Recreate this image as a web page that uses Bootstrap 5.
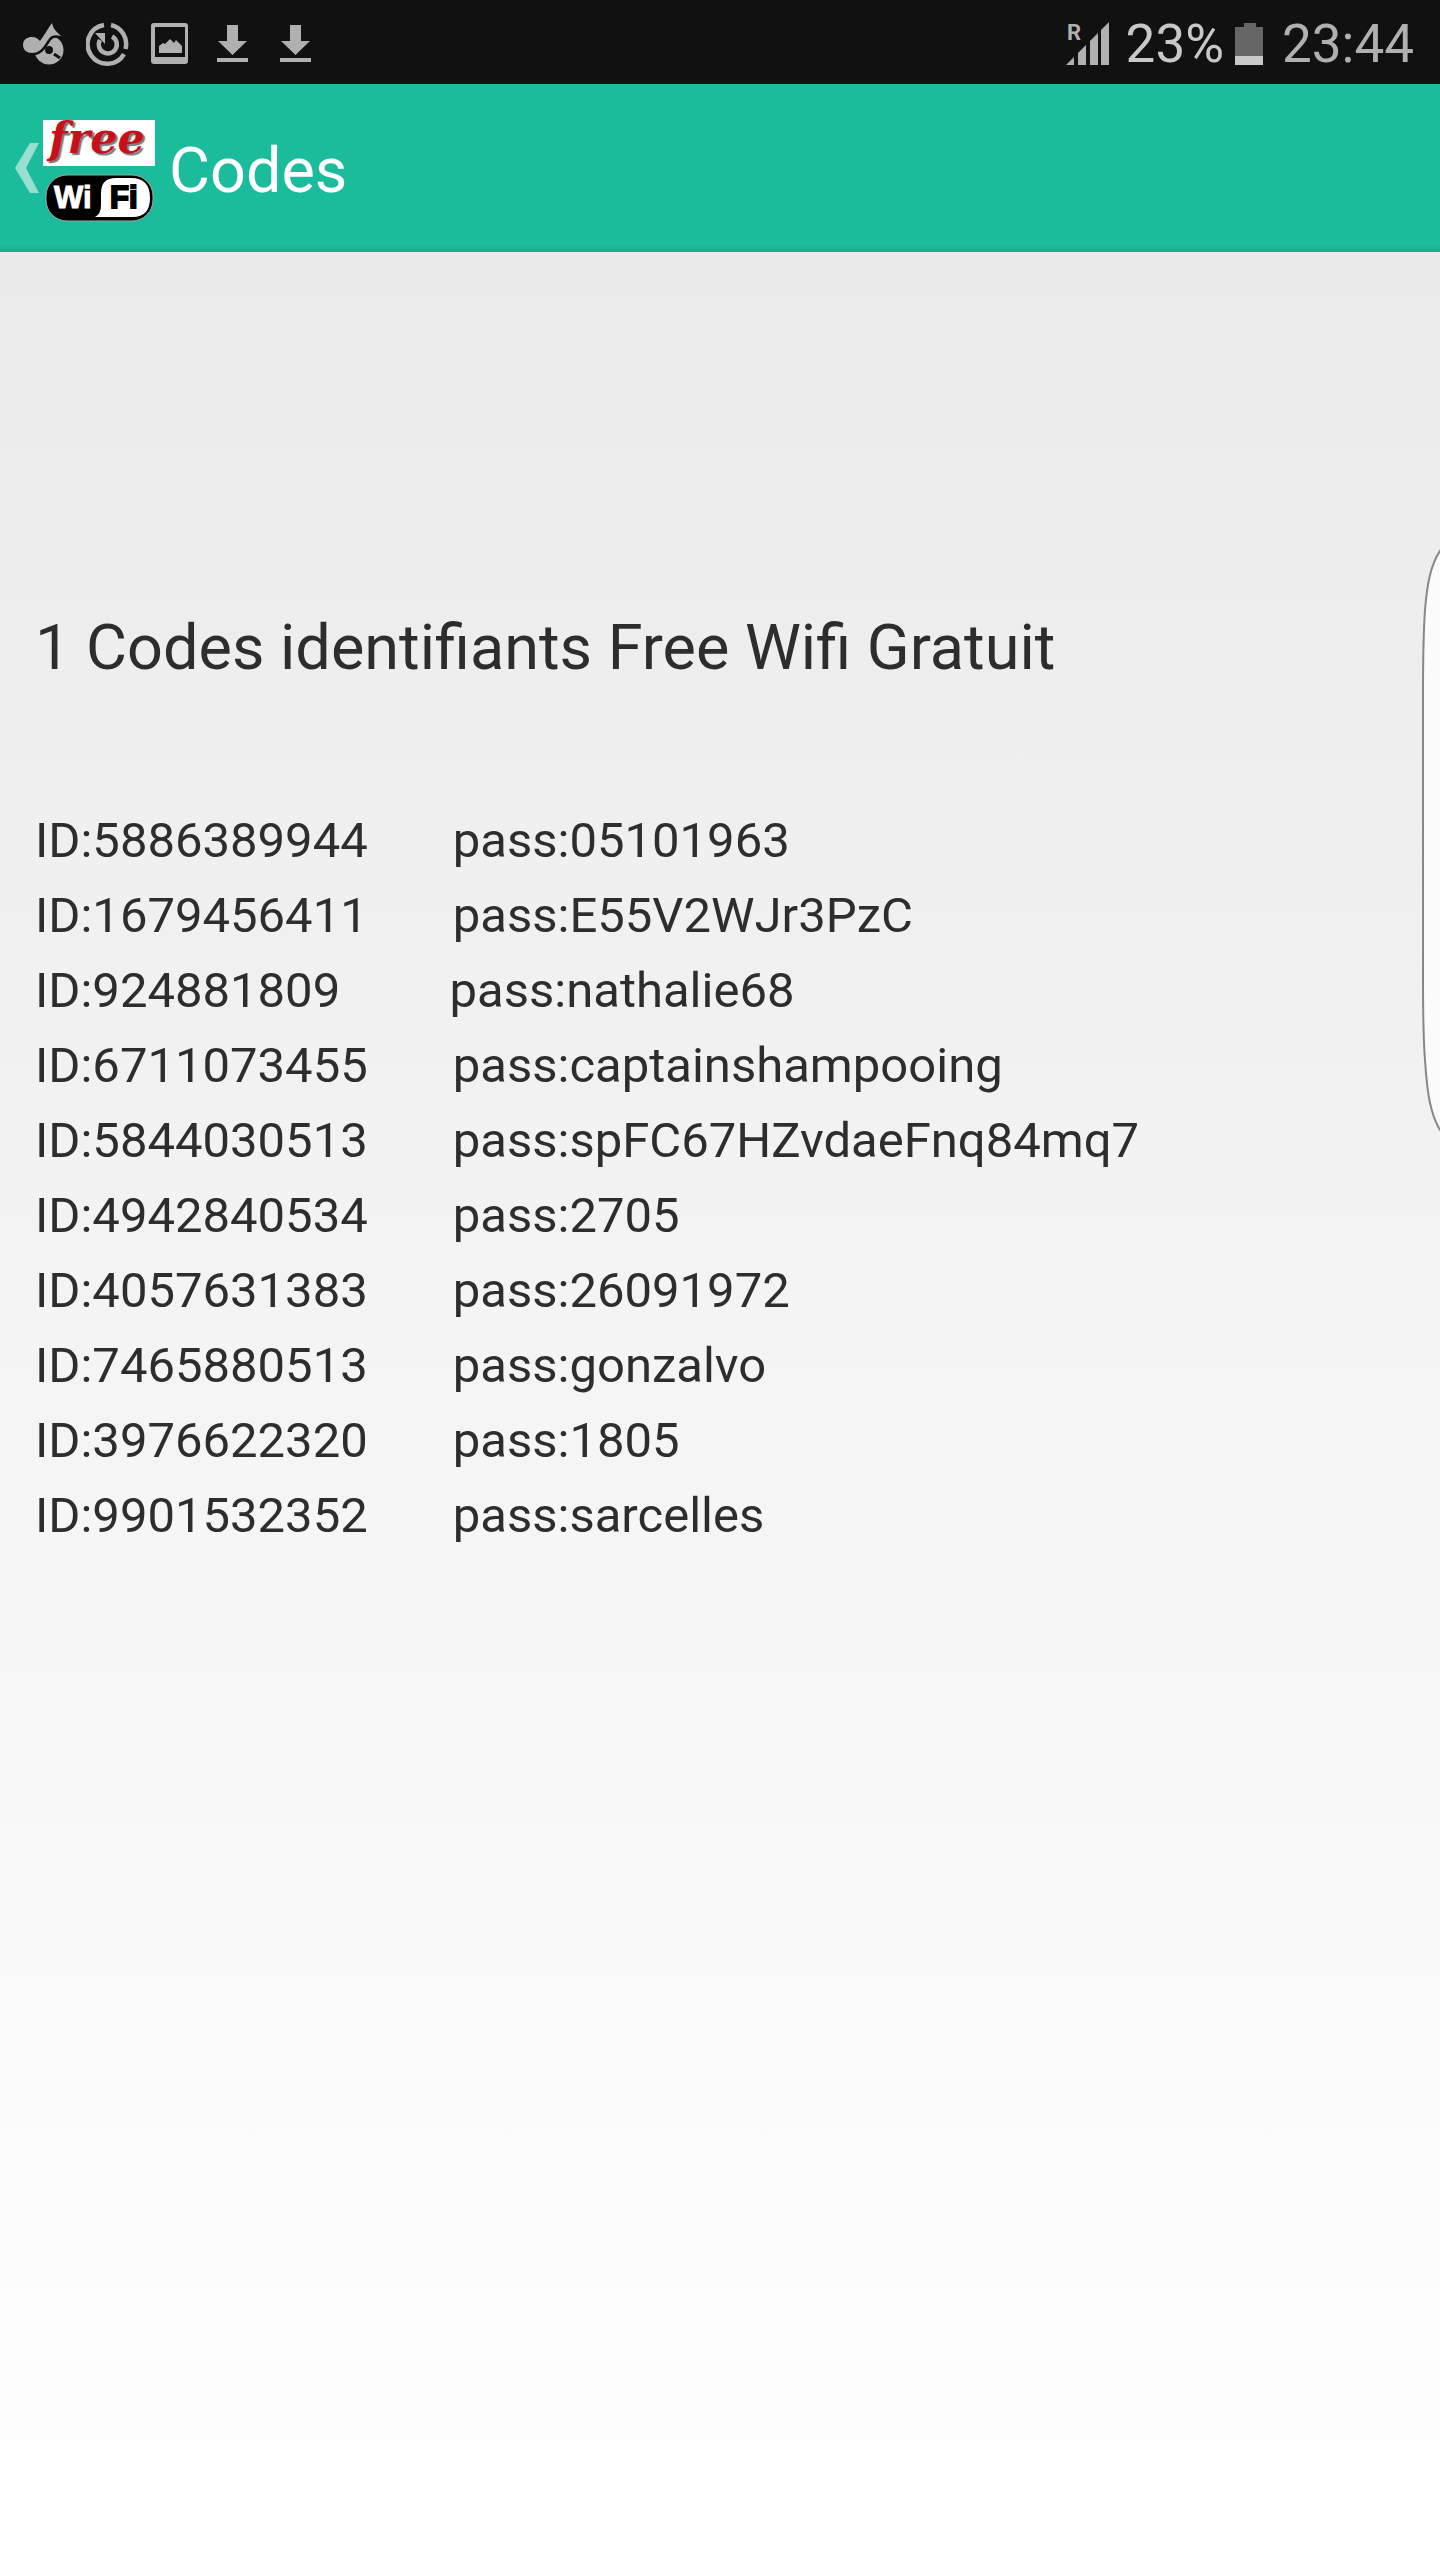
<!DOCTYPE html>
<html lang="fr">
<head>
<meta charset="utf-8">
<meta name="viewport" content="width=device-width, initial-scale=1">
<title>Codes</title>
<link href="https://cdn.jsdelivr.net/npm/bootstrap@5.3.0/dist/css/bootstrap.min.css" rel="stylesheet">
<style>
  body {
    font-family: Roboto, "Noto Sans", sans-serif;
    color: #2d2d2d;
    background: linear-gradient(#e8e8e8, #ffffff) no-repeat;
  }
  .status-bar { height: 84px; background: #111; color: #b0b0b0; font-size: 53px; line-height: 80px; padding: 4px 26px 0 22px; }
  .status-bar svg { display: block; fill: #b0b0b0; }
  .status-icons { gap: 20px; }
  .battery-level { color: #c8c8c8; }
  .action-bar { height: 168px; padding: 0 14px; background: linear-gradient(#1bbc9b 160px, #19ab8e); }
  .home-link { gap: 4px; }
  .screen-title { font-size: 63px; line-height: 72px; padding: 6px 0 0 14px; }
  .codes-page { padding: 352px 35px 0; }
  .codes-heading { font-size: 63px; line-height: 88px; margin-bottom: 111px; font-weight: 400; }
  .code-list { font-size: 49px; line-height: 75px; }
  .code-list li { white-space: pre-wrap; }
  .edge-handle { top: 546px; right: 0; }
</style>
<script src="https://cdn.jsdelivr.net/npm/bootstrap@5.3.0/dist/js/bootstrap.bundle.min.js"></script>
</head>
<body class="min-vh-100 position-relative">
<header>
  <div class="status-bar d-flex align-items-center justify-content-between">
    <div class="status-icons d-flex align-items-center">
      <!-- music -->
      <svg width="44" height="44" viewBox="0 0 44 44" aria-hidden="true">
        <circle cx="27" cy="28" r="14.500"/>
        <path d="M1 23c0-6 5-8 9-8c4 0 6 2 8 4L30 1c1 6 5 9 9 13c-4-1-7-1-9 0C24 17 22 31 10 31C5 31 1 28 1 23z" stroke="#111" stroke-width="5" stroke-linejoin="round"/>
        <path d="M1 23c0-6 5-8 9-8c4 0 6 2 8 4C21 15 25 8 30 1c1 6 5 9 9 13c-4-1-7-1-9 0C24 17 22 31 10 31C5 31 1 28 1 23z"/>
        <circle cx="27" cy="28" r="4" fill="#111"/><path d="M32 32l6 4" stroke="#111" stroke-width="3"/>
      </svg>
      <!-- power ring -->
      <svg width="44" height="44" viewBox="0 0 44 44" aria-hidden="true">
        <g fill="none" stroke="#b0b0b0" stroke-width="4.500">
          <path d="M25 3A19.500 19.500 0 0 1 39.500 27M38 32A19.500 19.500 0 1 1 18 3"/>
          <path d="M26 14.500A9 9 0 1 1 14 18" stroke-width="4.500"/>
        </g>
        <path d="M9 11h10v11z"/>
        <path d="M20 6h3v17h-3z" fill="#111"/>
      </svg>
      <!-- picture -->
      <svg width="42" height="44" viewBox="0 0 42 44" aria-hidden="true">
        <path fill-rule="evenodd" d="M5 1h30q3 0 3 3v35q0 3-3 3H4q-3 0-3-3V4q0-3 3-3zM5 5v30h30V5z"/>
        <path d="M9 31v-7l4-3 2 1 5-5 4 4 2-3 6 6v7z"/>
      </svg>
      <!-- downloads -->
      <svg width="43" height="40" viewBox="0 0 43 40" aria-hidden="true"><path d="M15 1h11v16h9L20.500 31 6 17h9zM5 34h31v4H5z"/></svg>
      <svg width="43" height="40" viewBox="0 0 43 40" aria-hidden="true"><path d="M15 1h11v16h9L20.500 31 6 17h9zM5 34h31v4H5z"/></svg>
    </div>
    <div class="d-flex align-items-center">
      <svg class="me-3" width="44" height="52" viewBox="0 -4 44 52" role="img" aria-label="Signal">
        <text x="1" y="18" font-family="Roboto" font-weight="700" font-size="22">R</text>
        <path d="M0 43l8-8v8zM12 31l8-8v20h-8zM24 19l8-8v32h-8zM35 8l8-8v43h-8z"/>
      </svg>
      <span class="battery-level">23%</span>
      <svg class="mx-2" width="34" height="42" viewBox="-2 0 34 42" role="img" aria-label="Batterie">
        <path d="M10 0h12v4h7v29H1V4h9z" fill="#666"/><path d="M1 33h28v9H1z" fill="#c8c8c8"/>
      </svg>
      <time class="ps-2">23:44</time>
    </div>
  </div>
  <nav class="action-bar d-flex align-items-center" aria-label="Navigation">
    <a href="#" class="home-link d-flex align-items-center" aria-label="Retour">
      <svg width="25" height="50" viewBox="0 0 25 50" aria-hidden="true"><path d="M16 0h9L12 25l13 25h-9L1 25z" fill="#99dfd0"/></svg>
      <svg width="112" height="128" viewBox="0 -16 112 128" role="img" aria-label="Free WiFi">
        <path d="M0 0h112v46H0z" fill="#fff"/>
        <text x="6" y="33" font-family="DejaVu Serif" font-weight="700" font-style="italic" font-size="43" fill="#c8101a" style="text-shadow: 2px 2px 1px #777">free</text>
        <rect x="3" y="55" width="107" height="46" rx="21" fill="#000" stroke="#9aa9a5" stroke-width="1"/>
        <path d="M52 97q6-3 6-12V73q0-15 15-15h15q19 0 19 20t-19 19z" fill="#fff"/>
        <g font-family="Liberation Sans" font-weight="700" font-size="31">
          <text x="11" y="88" fill="#fff" stroke="#fff">Wi</text>
          <text x="67" y="88" fill="#000" stroke="#000" stroke-width="2">Fi</text>
        </g>
      </svg>
    </a>
    <h1 class="screen-title text-white fw-normal mb-0">Codes</h1>
  </nav>
</header>
<main class="codes-page">
  <h2 class="codes-heading">1 Codes identifiants Free Wifi Gratuit</h2>
  <ul class="code-list list-unstyled mb-0">
    <li>ID:5886389944       pass:05101963</li>
    <li>ID:1679456411       pass:E55V2WJr3PzC</li>
    <li>ID:924881809         pass:nathalie68</li>
    <li>ID:6711073455       pass:captainshampooing</li>
    <li>ID:5844030513       pass:spFC67HZvdaeFnq84mq7</li>
    <li>ID:4942840534       pass:2705</li>
    <li>ID:4057631383       pass:26091972</li>
    <li>ID:7465880513       pass:gonzalvo</li>
    <li>ID:3976622320       pass:1805</li>
    <li>ID:9901532352       pass:sarcelles</li>
  </ul>
</main>
<!-- edge panel handle -->
<svg class="edge-handle position-absolute" width="20" height="590" viewBox="0 0 20 590" aria-hidden="true">
  <path d="M22 2C10 18 7 40 5 64C3 92 3 120 3 150V430C3 460 3 490 5 514C7 545 10 570 22 587" fill="#fbfbfb" stroke="#888" stroke-width="2"/>
</svg>
</body>
</html>
